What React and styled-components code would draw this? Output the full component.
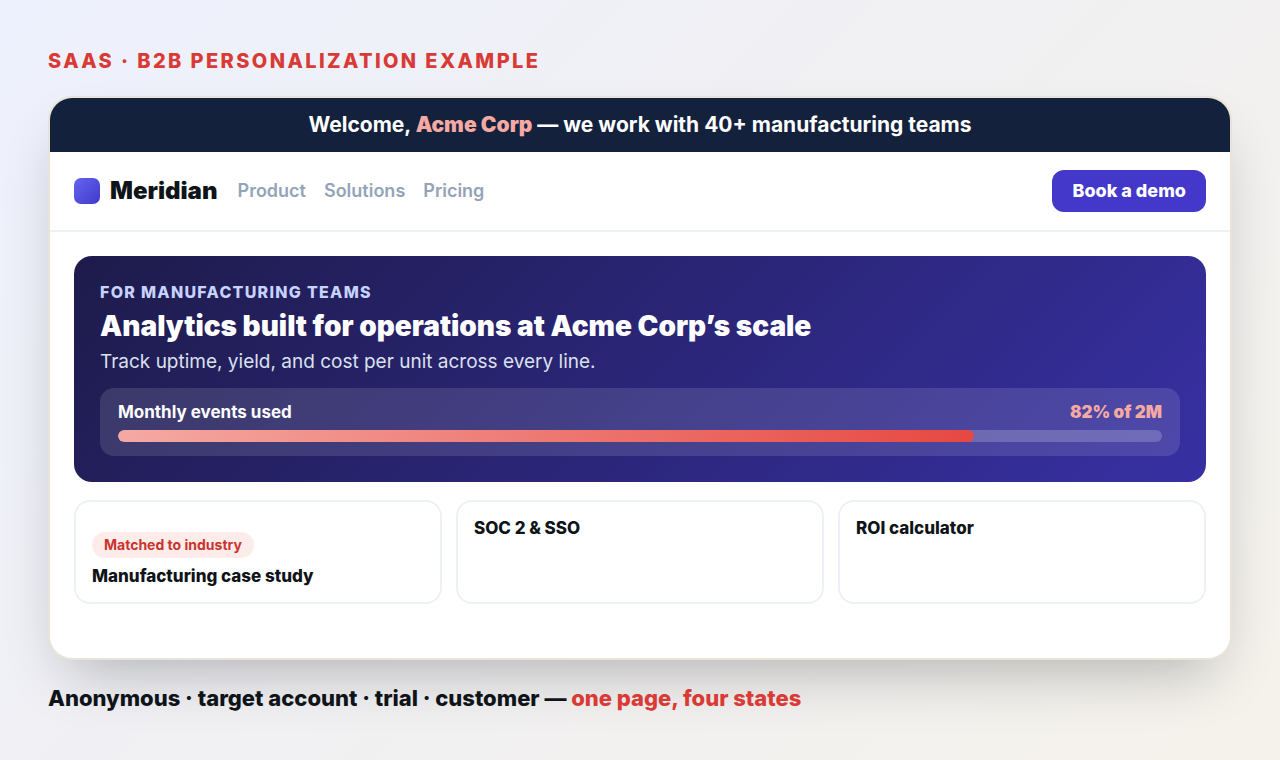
import React from "react"
import styled, { createGlobalStyle } from "styled-components"

const links = ["Product", "Solutions", "Pricing"]

const cards = [
  { title: "Manufacturing case study", tag: "Matched to industry" },
  { title: "SOC 2 & SSO" },
  { title: "ROI calculator" },
]

const usage = { label: "Monthly events used", percent: 82, limit: "2M" }

const GlobalStyle = createGlobalStyle`
  * {
    box-sizing: border-box;
  }

  body {
    margin: 0;
    font-family: Inter, "Liberation Sans", sans-serif;
    color: #0f1419;
  }

  h1, h2, h3, p {
    margin: 0;
  }
`;

const Page = styled.main`
  display: flex;
  flex-direction: column;
  min-height: 100vh;
  padding: 48px;
  background: linear-gradient(135deg, #edf1fd 0%, #f1f0f2 50%, #f5f2eb 100%);
`;

const Kicker = styled.p`
  margin-bottom: 22px;
  font-size: 20px;
  line-height: 26px;
  font-weight: 800;
  letter-spacing: 0.12em;
  text-transform: uppercase;
  color: #d93a35;
`;

const Site = styled.section`
  flex: 1;
  overflow: hidden;
  background: white;
  border: 2px solid #e8e4d9;
  border-radius: 24px;
  box-shadow: 0 28px 60px -20px rgba(15, 20, 25, 0.3);
`;

const Banner = styled.p`
  padding: 14px 24px;
  font-size: 21px;
  line-height: 26px;
  font-weight: 700;
  text-align: center;
  color: white;
  background: #14213d;

  strong {
    font-weight: 900;
    color: #f5a9a3;
  }
`;

const Header = styled.header`
  display: flex;
  align-items: center;
  justify-content: space-between;
  padding: 18px 24px;
  border-bottom: 2px solid #edf1f6;
`;

const Brand = styled.div`
  display: flex;
  align-items: center;
  gap: 10px;
  font-size: 24px;
  line-height: 30px;
  font-weight: 900;
`;

const Mark = styled.span`
  width: 26px;
  height: 26px;
  border-radius: 7px;
  background: linear-gradient(135deg, #6366f1, #4338ca);
`;

const HeaderLeft = styled.div`
  display: flex;
  align-items: center;
  gap: 20px;
`;

const Nav = styled.nav`
  display: flex;
  gap: 18px;

  a {
    font-size: 18px;
    line-height: 22px;
    font-weight: 600;
    color: #94a3b8;
    text-decoration: none;
  }
`;

const DemoButton = styled.button`
  padding: 10px 20px;
  font: inherit;
  font-size: 18px;
  line-height: 22px;
  font-weight: 800;
  color: white;
  background: #4338ca;
  border: 0;
  border-radius: 12px;
  cursor: pointer;
`;

const Content = styled.div`
  display: flex;
  flex-direction: column;
  gap: 18px;
  padding: 24px;
`;

const Hero = styled.section`
  padding: 26px;
  color: white;
  background: linear-gradient(135deg, #1e1b4b, #3730a3);
  border-radius: 18px;
`;

const Audience = styled.p`
  font-size: 16px;
  line-height: 20px;
  font-weight: 800;
  letter-spacing: 0.08em;
  text-transform: uppercase;
  color: #c7d2fe;
`;

const Title = styled.h1`
  margin: 6px 0 4px;
  font-size: 28px;
  line-height: 36px;
  font-weight: 900;
`;

const Lead = styled.p`
  font-size: 19px;
  line-height: 28px;
  color: #dbe0ee;
`;

const Meter = styled.div`
  margin-top: 12px;
  padding: 14px 18px;
  background: rgba(255, 255, 255, 0.12);
  border-radius: 14px;
`;

const MeterRow = styled.div`
  display: flex;
  justify-content: space-between;
  margin-bottom: 8px;
  font-size: 17px;
  line-height: 20px;
  font-weight: 700;

  strong {
    font-weight: 900;
    color: #f5a9a3;
  }
`;

const Track = styled.div`
  height: 12px;
  overflow: hidden;
  background: rgba(255, 255, 255, 0.2);
  border-radius: 6px;
`;

const Fill = styled.div`
  height: 100%;
  background: linear-gradient(90deg, #f5a9a3, #e64842);
  border-radius: 6px;
`;

const Cards = styled.div`
  display: grid;
  grid-template-columns: repeat(3, 1fr);
  gap: 14px;
`;

const Card = styled.article`
  padding: 16px;
  border: 2px solid #edf1f6;
  border-radius: 16px;

  h2 {
    font-size: 17px;
    line-height: 20px;
    font-weight: 800;
  }
`;

const Tag = styled.p`
  width: fit-content;
  margin: 14px 0 8px;
  padding: 4px 12px;
  font-size: 14px;
  line-height: 18px;
  font-weight: 700;
  color: #c9342e;
  background: #feecea;
  border-radius: 13px;
`;

const Caption = styled.p`
  margin-top: 24px;
  font-size: 22px;
  line-height: 28px;
  font-weight: 800;

  em {
    font-style: normal;
    color: #d93a35;
  }
`;

export default () => (
  <>
    <GlobalStyle />
    <Page>
      <Kicker>SaaS · B2B personalization example</Kicker>
      <Site>
        <Banner>
          Welcome, <strong>Acme Corp</strong> — we work with 40+ manufacturing teams
        </Banner>
        <Header>
          <HeaderLeft>
            <Brand>
              <Mark />
              Meridian
            </Brand>
            <Nav>
              {links.map((link) => (
                <a key={link} href={`#${link.toLowerCase()}`}>{link}</a>
              ))}
            </Nav>
          </HeaderLeft>
          <DemoButton type="button">Book a demo</DemoButton>
        </Header>
        <Content>
          <Hero>
            <Audience>For manufacturing teams</Audience>
            <Title>Analytics built for operations at Acme Corp’s scale</Title>
            <Lead>Track uptime, yield, and cost per unit across every line.</Lead>
            <Meter>
              <MeterRow>
                <span id="usage-label">{usage.label}</span>
                <strong>{`${usage.percent}% of ${usage.limit}`}</strong>
              </MeterRow>
              <Track
                role="progressbar"
                aria-labelledby="usage-label"
                aria-valuenow={usage.percent}
                aria-valuemin={0}
                aria-valuemax={100}
              >
                <Fill style={{ width: `${usage.percent}%` }} />
              </Track>
            </Meter>
          </Hero>
          <Cards>
            {cards.map((card) => (
              <Card key={card.title}>
                {card.tag && <Tag>{card.tag}</Tag>}
                <h2>{card.title}</h2>
              </Card>
            ))}
          </Cards>
        </Content>
      </Site>
      <Caption>
        Anonymous · target account · trial · customer — <em>one page, four states</em>
      </Caption>
    </Page>
  </>
)
